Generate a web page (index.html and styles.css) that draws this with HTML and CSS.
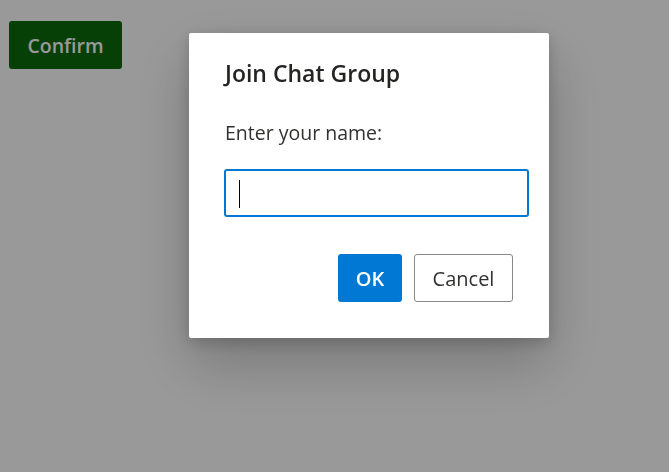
FILE: index.html
```html
<!DOCTYPE html>
<html lang="en">
<head>
<meta charset="utf-8">
<title>Join Chat Group</title>
<link rel="stylesheet" href="styles.css">
</head>
<body>
<main class="page">
  <button class="btn-confirm" type="button">Confirm</button>
</main>
<div class="overlay"></div>
<div class="dialog" role="dialog" aria-labelledby="dlg-title">
  <h2 class="dialog-title" id="dlg-title">Join Chat Group</h2>
  <label class="dialog-label" for="name">Enter your name:</label>
  <div class="field">
    <input class="field-input" id="name" type="text">
    <span class="caret"></span>
  </div>
  <div class="dialog-actions">
    <button class="btn btn-primary" type="button">OK</button>
    <button class="btn btn-default" type="button">Cancel</button>
  </div>
</div>
</body>
</html>
```
FILE: styles.css
```css
html, body {
  margin: 0;
  padding: 0;
  width: 669px;
  height: 472px;
  overflow: hidden;
  background: #ffffff;
  font-family: "Open Sans", "Noto Sans", sans-serif;
}

.page {
  padding: 21px 0 0 9px;
}

.btn-confirm {
  width: 113px;
  height: 48px;
  border: none;
  border-radius: 3px;
  background: #0a6b0a;
  color: #ffffff;
  font-family: inherit;
  font-size: 19.5px;
  font-weight: 600;
  padding: 0;
}

.overlay {
  position: fixed;
  inset: 0;
  background: rgba(0, 0, 0, 0.4);
}

.dialog {
  position: fixed;
  left: 189px;
  top: 33px;
  width: 360px;
  height: 305px;
  box-sizing: border-box;
  padding: 24px 36px 0 36px;
  background: #ffffff;
  border-radius: 2px;
  box-shadow: 0 25.6px 57.6px rgba(0, 0, 0, 0.22), 0 4.8px 14.4px rgba(0, 0, 0, 0.18);
  display: flex;
  flex-direction: column;
}

.dialog-title {
  margin: 0;
  font-size: 23px;
  line-height: 32px;
  font-weight: 600;
  color: #252423;
}

.dialog-label {
  margin-top: 30px;
  font-size: 19.5px;
  line-height: 28px;
  color: #323130;
}

.field {
  position: relative;
  margin: 22px 0 0 -1px;
  width: 305px;
  height: 48px;
}

.field-input {
  box-sizing: border-box;
  width: 100%;
  height: 100%;
  border: 2px solid #0078d4;
  border-radius: 3px;
  outline: none;
  padding: 0 13px;
  font-family: inherit;
  font-size: 19.5px;
  background: #ffffff;
}

.caret {
  position: absolute;
  left: 15px;
  top: 11px;
  width: 1px;
  height: 28px;
  background: #000000;
}

.dialog-actions {
  display: flex;
  justify-content: flex-end;
  gap: 12px;
  margin-top: 37px;
}

.btn {
  height: 48px;
  border-radius: 3px;
  font-family: inherit;
  font-size: 20px;
  padding: 0;
  box-sizing: border-box;
}

.btn-primary {
  width: 64px;
  background: #0078d4;
  border: none;
  color: #ffffff;
  font-weight: 600;
}

.btn-default {
  width: 99px;
  background: #ffffff;
  border: 1px solid #8a8886;
  color: #323130;
}
```
